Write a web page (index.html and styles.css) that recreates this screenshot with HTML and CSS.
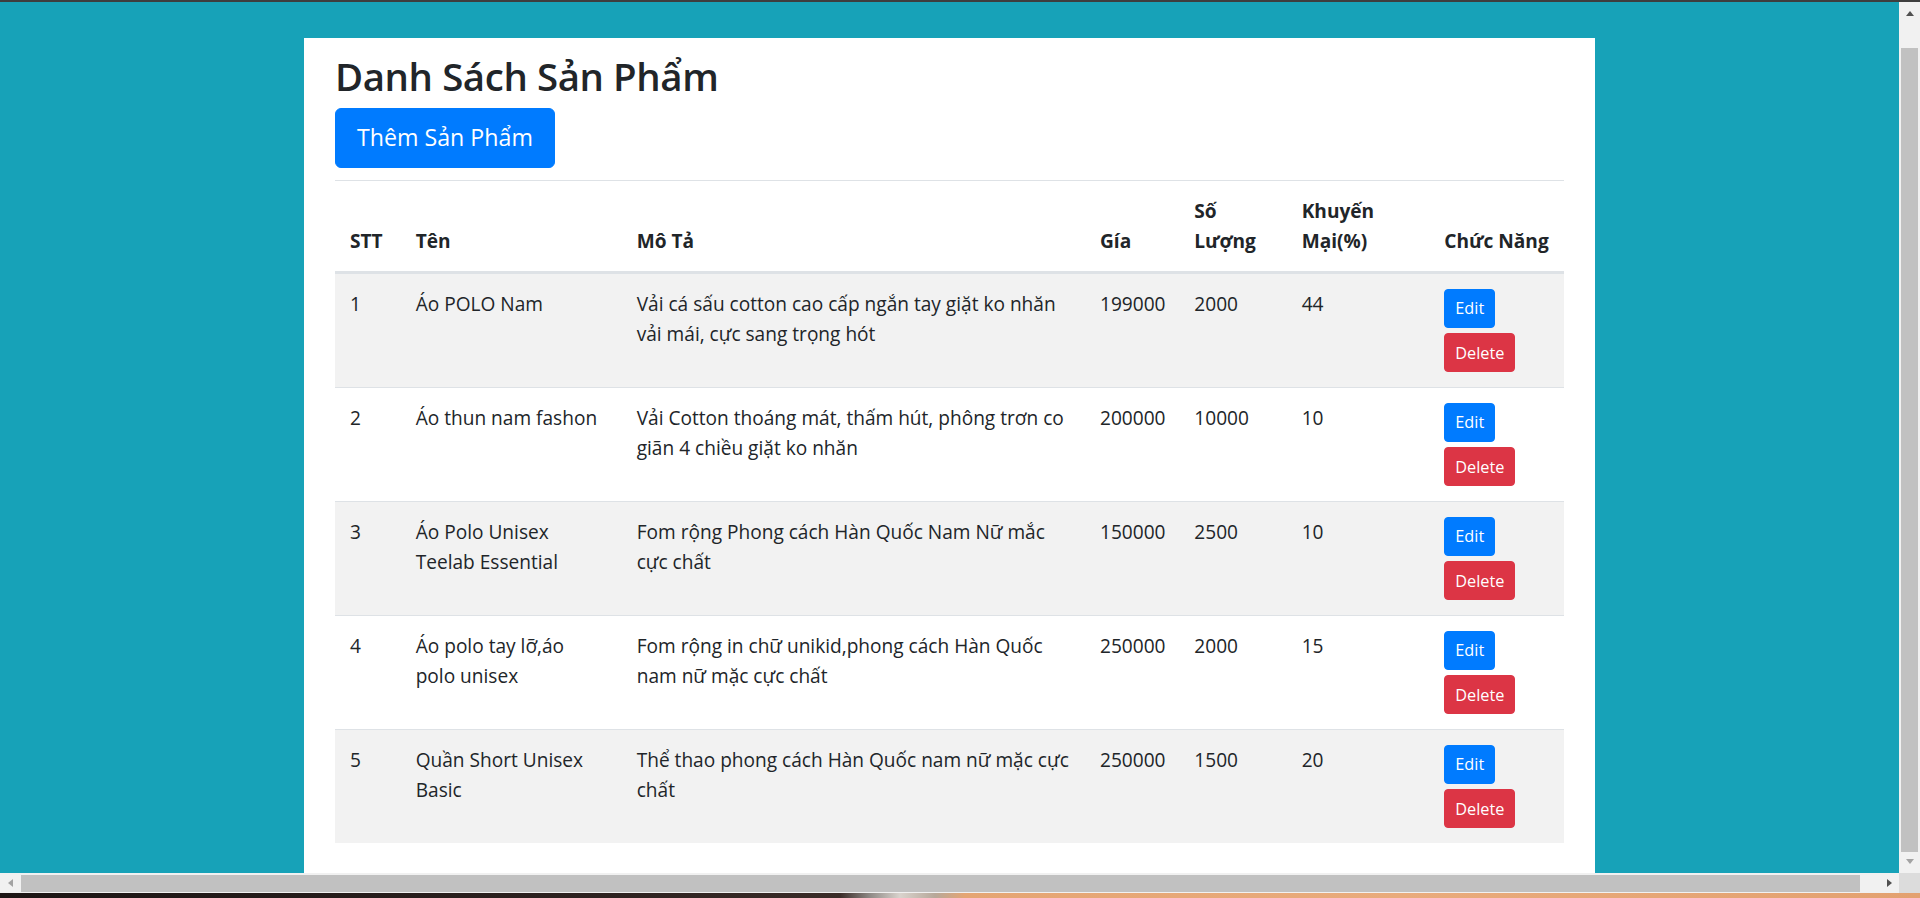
FILE: index.html
```html
<!DOCTYPE html>
<html lang="vi">
<head>
<meta charset="utf-8">
<title>Danh Sách Sản Phẩm</title>
<link rel="stylesheet" href="styles.css">
</head>
<body>
<div class="screen">
  <div class="topbar"></div>
  <div class="viewport">
    <main class="page">
      <section class="container">
        <h2 class="title">Danh Sách Sản Phẩm</h2>
        <a class="btn btn-primary btn-lg" href="#">Thêm Sản Phẩm</a>
        <table class="table">
          <colgroup>
            <col class="c-stt"><col class="c-ten"><col class="c-mota"><col class="c-gia"><col class="c-sl"><col class="c-km"><col class="c-cn">
          </colgroup>
          <thead>
            <tr>
              <th>STT</th><th class="ten">Tên</th><th class="mota">Mô Tả</th><th>Gía</th><th>Số Lượng</th><th>Khuyến Mại(%)</th><th>Chức Năng</th>
            </tr>
          </thead>
          <tbody>
            <tr class="odd">
              <td>1</td><td class="ten">Áo POLO Nam</td><td class="mota">Vải cá sấu cotton cao cấp ngắn tay giặt ko nhăn vải mái, cực sang trọng hót</td><td>199000</td><td>2000</td><td>44</td>
              <td><div class="actions"><a class="btn btn-primary btn-sm" href="#">Edit</a><a class="btn btn-danger btn-sm" href="#">Delete</a></div></td>
            </tr>
            <tr>
              <td>2</td><td class="ten">Áo thun nam fashon</td><td class="mota">Vải Cotton thoáng mát, thấm hút, phông trơn co giãn 4 chiều giặt ko nhăn</td><td>200000</td><td>10000</td><td>10</td>
              <td><div class="actions"><a class="btn btn-primary btn-sm" href="#">Edit</a><a class="btn btn-danger btn-sm" href="#">Delete</a></div></td>
            </tr>
            <tr class="odd">
              <td>3</td><td class="ten">Áo Polo Unisex Teelab Essential</td><td class="mota">Fom rộng Phong cách Hàn Quốc Nam Nữ mắc cực chất</td><td>150000</td><td>2500</td><td>10</td>
              <td><div class="actions"><a class="btn btn-primary btn-sm" href="#">Edit</a><a class="btn btn-danger btn-sm" href="#">Delete</a></div></td>
            </tr>
            <tr>
              <td>4</td><td class="ten">Áo polo tay lỡ,áo polo unisex</td><td class="mota">Fom rộng in chữ unikid,phong cách Hàn Quốc nam nữ mặc cực chất</td><td>250000</td><td>2000</td><td>15</td>
              <td><div class="actions"><a class="btn btn-primary btn-sm" href="#">Edit</a><a class="btn btn-danger btn-sm" href="#">Delete</a></div></td>
            </tr>
            <tr class="odd">
              <td>5</td><td class="ten">Quần Short Unisex Basic</td><td class="mota">Thể thao phong cách Hàn Quốc nam nữ mặc cực chất</td><td>250000</td><td>1500</td><td>20</td>
              <td><div class="actions"><a class="btn btn-primary btn-sm" href="#">Edit</a><a class="btn btn-danger btn-sm" href="#">Delete</a></div></td>
            </tr>
          </tbody>
        </table>
      </section>
    </main>
    <div class="vscroll">
      <div class="vbtn vbtn-up"><span class="arrow-up"></span></div>
      <div class="vthumb"></div>
      <div class="vbtn vbtn-down"><span class="arrow-down"></span></div>
    </div>
  </div>
  <div class="hscrollrow">
    <div class="hscroll">
      <div class="hbtn"><span class="arrow-left"></span></div>
      <div class="hthumb"></div>
      <div class="hbtn hbtn-right"><span class="arrow-right"></span></div>
    </div>
    <div class="corner"></div>
  </div>
  <div class="strip"></div>
</div>
</body>
</html>
```
FILE: styles.css
```css
* { box-sizing: border-box; }
html, body { margin: 0; padding: 0; }
body {
  width: 1920px;
  height: 898px;
  overflow: hidden;
  font-family: "Open Sans", "Noto Sans", sans-serif;
  font-size: 19.1px;
  line-height: 30px;
  color: #212529;
}
.screen { display: flex; flex-direction: column; height: 898px; }
.topbar { height: 2px; background: #3e3e3e; flex: none; }
.viewport { display: flex; height: 871px; flex: none; }
.page {
  flex: 1;
  background: #17a2b8;
  padding-top: 36px;
  display: flex;
  flex-direction: column;
  overflow: hidden;
}
.container {
  flex: 1;
  margin-left: 304px;
  width: 1291px;
  background: #fff;
  padding: 14px 31px 0;
}
.title {
  margin: 0 0 8px;
  font-size: 38.4px;
  line-height: 48px;
  font-weight: 600;
  letter-spacing: -0.4px;
  color: #212529;
}
.btn {
  display: inline-block;
  color: #fff;
  text-decoration: none;
  border: 1px solid transparent;
  white-space: nowrap;
}
.btn-primary { background: #007bff; border-color: #007bff; }
.btn-danger { background: #dc3545; border-color: #dc3545; }
.btn-lg {
  font-size: 23.2px;
  line-height: 37.5px;
  padding: 10.25px 21px;
  border-radius: 6px;
}
.btn-sm {
  font-size: 16.3px;
  line-height: 26.25px;
  padding: 5.25px 10px;
  border-radius: 4px;
}
.table {
  margin-top: 12px;
  width: 1229px;
  table-layout: fixed;
  border-collapse: collapse;
}
.c-stt { width: 65.7px; }
.c-ten { width: 221px; }
.c-mota { width: 463.3px; }
.c-gia { width: 94.3px; }
.c-sl { width: 107.4px; }
.c-km { width: 142.6px; }
.c-cn { width: 134.7px; }
.table th, .table td {
  padding: 15px 4px 15px 15px;
  text-align: left;
  vertical-align: top;
  border-top: 1px solid #dee2e6;
}
.table th.ten, .table td.ten { padding-right: 14px; }
.table th.mota, .table td.mota { padding-right: 11px; }
.table thead th {
  vertical-align: bottom;
  font-weight: 700;
  border-bottom: 3px solid #dee2e6;
}
.table tbody tr.odd { background: #f2f2f2; }
.actions {
  display: flex;
  flex-direction: column;
  align-items: flex-start;
  gap: 5.5px;
}
/* scrollbars */
.vscroll {
  width: 21px;
  flex: none;
  background: #f1f1f1;
  display: flex;
  flex-direction: column;
}
.vbtn { display: flex; justify-content: center; }
.vbtn-up { height: 46px; padding-top: 9px; }
.vbtn-down { flex: 1; padding-top: 7px; }
.vthumb { height: 804px; margin: 0 2px; background: #c1c1c1; }
.arrow-up {
  width: 0; height: 0;
  border-left: 4px solid transparent;
  border-right: 4px solid transparent;
  border-bottom: 5px solid #505050;
}
.arrow-down {
  width: 0; height: 0;
  border-left: 4px solid transparent;
  border-right: 4px solid transparent;
  border-top: 5px solid #a3a3a3;
}
.hscrollrow { display: flex; height: 20px; flex: none; }
.hscroll {
  flex: 1;
  background: #f1f1f1;
  display: flex;
  align-items: stretch;
}
.hbtn { width: 21px; display: flex; align-items: center; justify-content: center; }
.hthumb { width: 1839px; margin: 2px 0 1px; background: #c1c1c1; }
.hbtn-right { margin-left: auto; width: 38px; justify-content: flex-start; padding-left: 26px; }
.arrow-left {
  width: 0; height: 0;
  border-top: 4px solid transparent;
  border-bottom: 4px solid transparent;
  border-right: 5px solid #a3a3a3;
}
.arrow-right {
  width: 0; height: 0;
  border-top: 4px solid transparent;
  border-bottom: 4px solid transparent;
  border-left: 5px solid #505050;
}
.corner { width: 21px; background: #dcdcdc; }
.strip {
  flex: 1;
  background: linear-gradient(90deg, #1c1514 0, #2e2220 600px, #3b2c28 840px, #8f8a86 870px, #d9d3cd 900px, #b7a89a 935px, #e5a573 965px, #e9ab7c 1400px, #e3a170 100%);
}
```
